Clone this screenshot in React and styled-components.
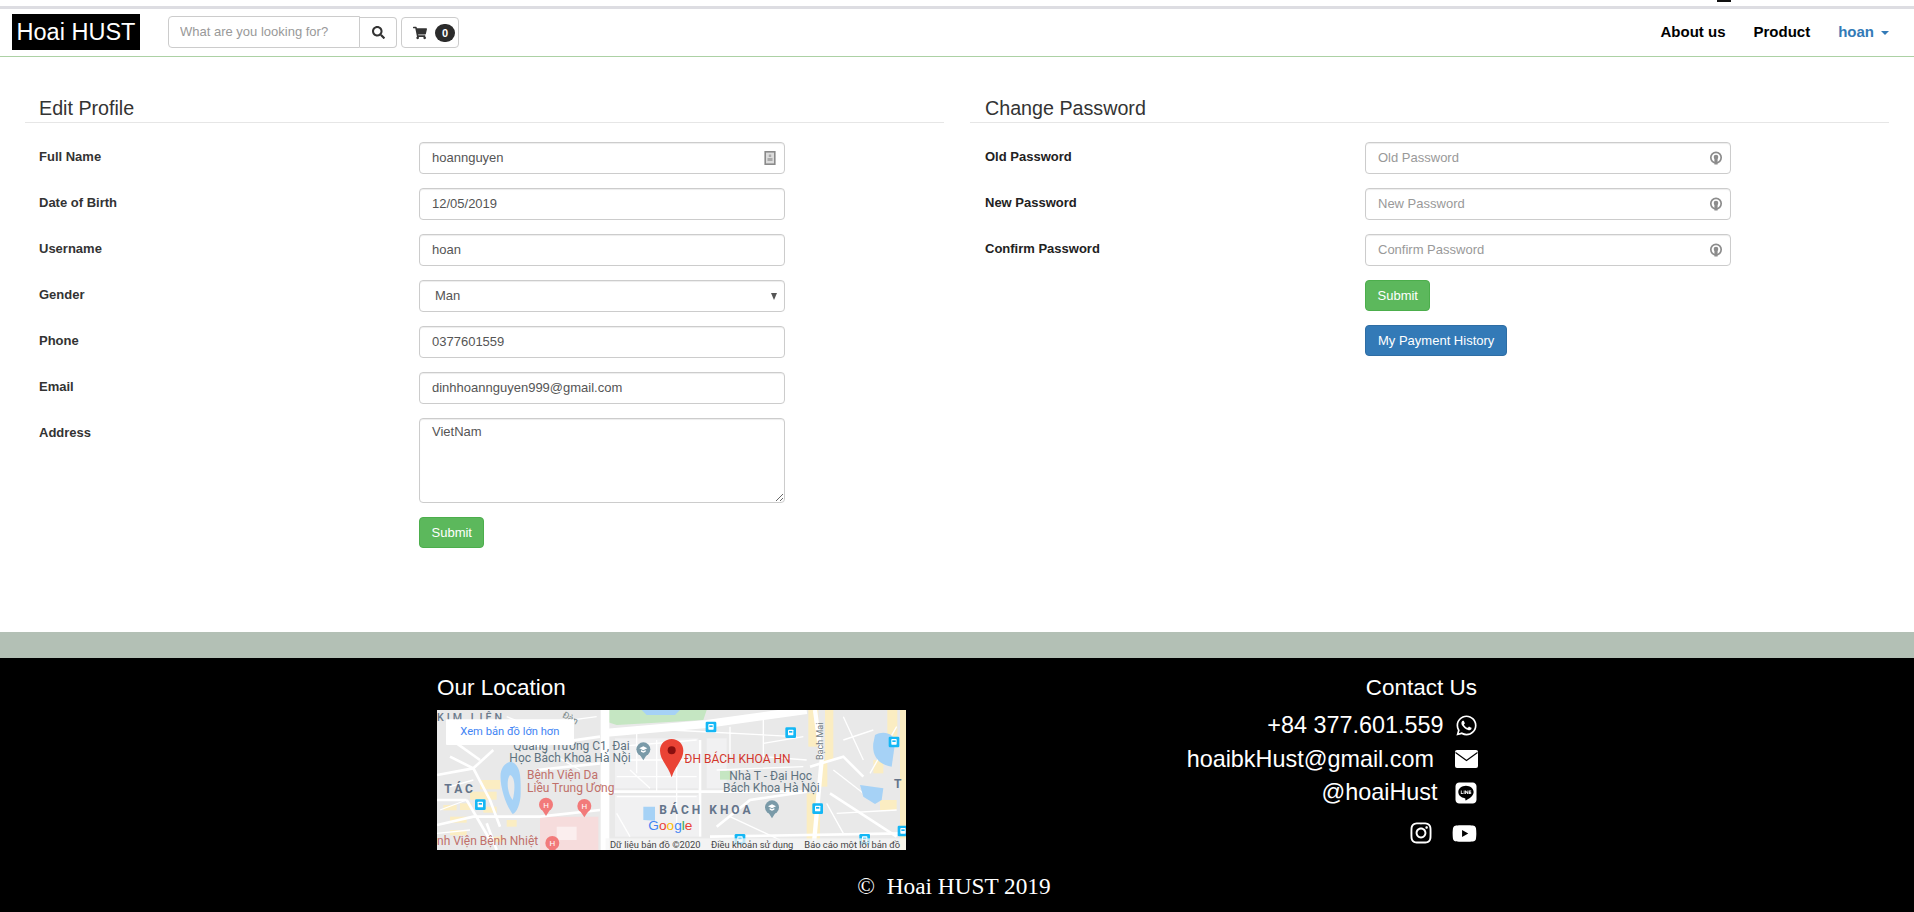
import styled, { createGlobalStyle } from "styled-components";
import { FaSearch, FaShoppingCart, FaWhatsapp, FaLine, FaInstagram, FaYoutube } from "react-icons/fa";

const GlobalStyle = createGlobalStyle`
  * { box-sizing: border-box; }
  body {
    margin: 0;
    background: #fff;
    font-family: "Liberation Sans", Arial, sans-serif;
    font-size: 13px;
    color: #333;
  }
`;

const TopStrip = styled.div`
  height: 6px;
  background: #fff;
  display: flex;
  justify-content: flex-end;
  padding-right: 183px;
`;

const TopMark = styled.span`
  width: 14px;
  height: 2px;
  background: #111;
`;

const TopLine = styled.div`
  height: 3px;
  background: #dddde2;
`;

const Navbar = styled.nav`
  height: 48px;
  border-bottom: 1px solid #acd1a4;
  display: flex;
  align-items: flex-start;
  justify-content: space-between;
  padding: 5px 25px 0 12px;
`;

const NavLeft = styled.div`
  display: flex;
  align-items: flex-start;
`;

const Logo = styled.a`
  width: 128px;
  height: 36px;
  background: #000;
  color: #fff;
  font-size: 23.5px;
  line-height: 36px;
  text-align: center;
`;

const SearchGroup = styled.div`
  display: flex;
  margin-left: 28px;
  margin-top: 2px;
`;

const SearchInput = styled.input`
  width: 192px;
  height: 32px;
  border: 1px solid #ccc;
  border-radius: 4px 0 0 4px;
  padding: 0 11px 1px;
  font: 13px "Liberation Sans", Arial, sans-serif;
  &::placeholder { color: #999; opacity: 1; }
`;

const ToolButton = styled.button`
  height: 31px;
  margin-top: 1px;
  background: #fff;
  border: 1px solid #ccc;
  color: #333;
  display: flex;
  align-items: center;
  padding: 0;
`;

const SearchButton = styled(ToolButton)`
  width: 37px;
  border-left: 0;
  border-radius: 0 4px 4px 0;
  justify-content: center;
  font-size: 13px;
`;

const CartButton = styled(ToolButton)`
  width: 58px;
  margin-left: 4px;
  border-radius: 4px;
  padding-left: 11px;
  font-size: 14px;
`;

const CartBadge = styled.span`
  width: 20px;
  height: 18px;
  margin-left: 8px;
  border-radius: 10px;
  background: #2b2b2b;
  color: #fff;
  font-size: 11px;
  font-weight: bold;
  line-height: 18px;
  text-align: center;
`;

const NavLinks = styled.div`
  display: flex;
  gap: 28px;
  padding-top: 9px;
`;

const NavLink = styled.a`
  font-size: 15px;
  font-weight: bold;
  line-height: 18px;
  color: ${(p) => (p.$active ? "#337ab7" : "#000")};
  display: flex;
  align-items: center;
`;

const Caret = styled.span`
  width: 0;
  height: 0;
  margin-left: 7px;
  margin-top: 2px;
  border-top: 4px solid #337ab7;
  border-left: 4px solid transparent;
  border-right: 4px solid transparent;
`;

const Main = styled.main`
  height: 575px;
  padding: 40px 25px 0;
  display: grid;
  grid-template-columns: 919px 919px;
  column-gap: 26px;
`;

const Column = styled.section`
  --inset: ${(p) => p.$inset}px;
`;

const Heading = styled.h3`
  margin: 0 0 19px;
  padding: 0 var(--inset) 3px;
  border-bottom: 1px solid #e6e6e6;
  font-size: 19.7px;
  font-weight: normal;
  line-height: 22px;
  color: #333;
`;

const FormRow = styled.div`
  display: grid;
  grid-template-columns: 380px 366px;
  padding-left: var(--inset);
  margin-bottom: 14px;
`;

const Label = styled.label`
  padding-top: 6px;
  font-size: 13px;
  font-weight: bold;
  line-height: 18px;
  color: ${(p) => (p.$dark ? "#222" : "#333")};
`;

const Field = styled.div`
  position: relative;
  height: ${(p) => p.$height || 32}px;
`;

const fieldStyle = `
  width: 100%;
  height: 100%;
  border: 1px solid #ccc;
  border-radius: 4px;
  background: #fff;
  box-shadow: inset 0 1px 1px rgba(0, 0, 0, 0.075);
  color: #555;
  font: 13px "Liberation Sans", Arial, sans-serif;
  padding: 5px 12px 7px;
  outline: none;
`;

const Input = styled.input`
  ${fieldStyle}
  &::placeholder { color: #999; opacity: 1; }
`;

const Select = styled.select`
  ${fieldStyle}
  appearance: none;
  padding-left: 15px;
`;

const Textarea = styled.textarea`
  ${fieldStyle}
  display: block;
  line-height: 18px;
  padding-top: 4px;
  resize: vertical;
`;

const FieldIcon = styled.svg`
  position: absolute;
  right: 8px;
  top: 9px;
  width: 14px;
  height: 14px;
`;

const SelectArrow = styled.span`
  position: absolute;
  right: 8px;
  top: 13px;
  width: 0;
  height: 0;
  border-top: 7px solid #555;
  border-left: 3.5px solid transparent;
  border-right: 3.5px solid transparent;
  pointer-events: none;
`;

const Button = styled.button`
  display: block;
  height: 31px;
  margin-bottom: 14px;
  padding: 0 ${(p) => (p.$primary ? 12 : 11.5)}px 1px;
  border: 1px solid ${(p) => (p.$primary ? "#2e6da4" : "#4cae4c")};
  border-radius: 4px;
  background: ${(p) => (p.$primary ? "#337ab7" : "#5cb85c")};
  color: #fff;
  font: 13px "Liberation Sans", Arial, sans-serif;
`;

const Band = styled.div`
  height: 26px;
  background: #b3c0b5;
`;

const Footer = styled.footer`
  height: 254px;
  background: #000;
  color: #fff;
  padding-top: 17px;
`;

const FooterInner = styled.div`
  width: 1040px;
  margin-left: 437px;
  display: flex;
  justify-content: space-between;
`;

const FooterTitle = styled.h4`
  margin: 0;
  font-size: 22.5px;
  font-weight: normal;
  line-height: 26px;
`;

const MapFrame = styled.svg`
  display: block;
  margin-top: 9px;
  width: 469px;
  height: 140px;
`;

const Contact = styled.div`
  display: flex;
  flex-direction: column;
  align-items: flex-end;
`;

const ContactRow = styled.div`
  display: flex;
  align-items: center;
  height: 33.5px;
  margin-right: -1px;
  gap: ${(p) => p.$gap}px;
  font-size: 23.4px;
  &:first-of-type { margin-top: 8px; }
  svg { font-size: ${(p) => p.$size}px; }
`;

const MailIcon = styled.svg`
  width: 23px;
  height: 18px;
`;

const SocialRow = styled.div`
  display: flex;
  align-items: center;
  gap: 19px;
  margin-top: 11px;
  font-size: 24px;
  svg:last-child { font-size: 25px; }
`;

const Copyright = styled.div`
  margin-top: 23px;
  padding-right: 6px;
  text-align: center;
  font-family: "Liberation Serif", "Times New Roman", serif;
  font-size: 23.3px;
  line-height: 26px;
  white-space: pre;
`;

const PersonIcon = () => (
  <FieldIcon viewBox="0 0 14 14">
    <rect x="2.2" y="0.8" width="9.6" height="12.4" fill="#ddd" stroke="#8a8a8a" strokeWidth="1.6" />
    <rect x="5.8" y="3.5" width="2.4" height="2.5" fill="#aaa" />
    <rect x="4.5" y="7" width="5" height="3" fill="#aaa" />
  </FieldIcon>
);

const KeyIcon = () => (
  <FieldIcon viewBox="0 0 14 14">
    <circle cx="7" cy="6.6" r="5.2" fill="none" stroke="#8c8c8c" strokeWidth="1.7" />
    <circle cx="7" cy="6" r="2.3" fill="#8c8c8c" />
    <rect x="5.4" y="6.5" width="3.2" height="7" fill="#8c8c8c" />
  </FieldIcon>
);

const BusStop = ({ x, y }) => (
  <g>
    <rect x={x} y={y} width="32" height="32" rx="4" fill="#14b7f5" />
    <rect x={x + 8} y={y + 7} width="16" height="17" rx="2" fill="#fff" />
    <rect x={x + 11} y={y + 11} width="10" height="5" fill="#14b7f5" />
  </g>
);

const Hospital = ({ x, y }) => (
  <g>
    <circle cx={x} cy={y} r="21" fill="#f27a7a" />
    <path d={`M${x - 11} ${y + 17} L${x} ${y + 34} L${x + 11} ${y + 17} Z`} fill="#f27a7a" />
    <text x={x} y={y + 9} textAnchor="middle" fontSize="24" fill="#fff" fontFamily="Roboto, sans-serif">H</text>
  </g>
);

const School = ({ x, y }) => (
  <g>
    <circle cx={x} cy={y} r="21" fill="#7a9aa8" />
    <path d={`M${x - 10} ${y + 17} L${x} ${y + 33} L${x + 10} ${y + 17} Z`} fill="#7a9aa8" />
    <path d={`M${x - 12} ${y - 3} L${x} ${y - 9} L${x + 12} ${y - 3} L${x} ${y + 3} Z`} fill="#fff" />
    <path d={`M${x - 7} ${y + 2} L${x} ${y + 6} L${x + 7} ${y + 2} L${x + 7} ${y + 7} L${x} ${y + 10} L${x - 7} ${y + 7} Z`} fill="#fff" />
  </g>
);

const roads = [
  "M21 345 L130 325 L180 420 L210 500",
  "M21 495 L130 470 L330 470 L510 450",
  "M130 325 L190 270 M60 290 L130 325 M80 250 L150 300",
  "M110 420 L180 540 M21 420 L110 420 M200 570 L170 490",
  "M300 260 L510 230 M320 330 L510 310",
  "M540 395 L1130 395",
  "M810 240 L810 530",
  "M840 530 L1420 520 M860 500 L960 420 L1130 395",
  "M1140 320 L1240 290 L1300 350 M1200 400 L1400 530",
];

const thinRoads = [
  "M21 520 L120 510 M60 380 L130 360 M30 450 L110 420",
  "M560 260 L800 240 M560 300 L800 300 M560 350 L800 350 M600 330 L660 385",
  "M620 200 L620 340 M680 240 L680 395 M740 320 L740 510 M560 410 L800 410 M560 460 L600 530",
  "M860 330 L1120 320 M900 200 L900 290 M1000 170 L1000 290 L1130 300 M720 210 L1100 230",
  "M230 170 L330 210 M350 190 L500 170 M380 290 L450 330 M1000 250 L1120 230",
  "M1210 330 L1300 400 M1240 170 L1300 300 M1320 340 L1400 200",
  "M1220 460 L1400 450 M1240 240 L1330 210 M900 470 L1050 540 M1240 520 L1190 430",
];

const yellow = [
  [150, 360, 60, 28], [120, 395, 80, 24], [90, 430, 35, 20], [60, 470, 50, 18], [160, 440, 40, 18],
  [230, 480, 30, 20], [40, 435, 40, 16], [60, 510, 50, 16], [190, 530, 30, 16],
  [1135, 150, 30, 110], [1185, 150, 25, 150], [1130, 400, 40, 140], [1172, 300, 20, 80], [1372, 150, 30, 90],
  [1410, 150, 18, 420], [1330, 300, 30, 40], [1350, 420, 50, 30],
];

const campus = [
  [555, 235, 250, 150], [555, 405, 250, 125], [830, 235, 60, 150],
];

const Map = () => (
  <MapFrame viewBox="21 150 1407 420" role="img" fontFamily="Roboto, 'Liberation Sans', sans-serif">
    <rect x="21" y="150" width="1407" height="420" fill="#e9e9e9" />
    <path d="M530 150 H830 L820 180 L560 195 L530 185 Z" fill="#c5e6c2" />
    <path d="M635 150 H750 L735 165 H650 Z" fill="#a6d2f6" />
    {campus.map(([x, y, w, h]) => (
      <rect key={`${x}-${y}`} x={x} y={y} width={w} height={h} fill="#f1f1f2" />
    ))}
    <path d="M330 470 H505 V570 H330 Z" fill="#f6dcdc" />
    <path d="M380 500 H440 V540 H380 Z" fill="#fff" opacity="0.5" />
    <rect x="870" y="333" width="32" height="26" fill="#c5e6c2" />
    {yellow.map(([x, y, w, h]) => (
      <rect key={`${x}-${y}`} x={x} y={y} width={w} height={h} fill="#fbedc2" />
    ))}
    {roads.map((d) => (
      <path key={d} d={d} stroke="#fff" strokeWidth="8" fill="none" />
    ))}
    {thinRoads.map((d) => (
      <path key={d} d={d} stroke="#fff" strokeWidth="4" fill="none" />
    ))}
    <path d="M525 150 V570" stroke="#fff" strokeWidth="26" />
    <path d="M530 218 L830 192 L1130 150" stroke="#fff" strokeWidth="24" fill="none" />
    <path d="M1155 150 L1175 300 L1150 570" stroke="#fff" strokeWidth="13" fill="none" />
    <path d="M240 305 C275 310 272 360 272 400 C272 430 260 460 248 462 C230 440 208 380 212 340 C216 320 225 310 240 305 Z" fill="#a6d2f6" />
    <path d="M240 345 C256 350 256 390 248 420 C232 400 228 360 240 345 Z" fill="#e9e9e9" />
    <path d="M1335 225 C1360 210 1395 220 1395 250 L1385 320 C1350 315 1325 290 1330 250 Z" fill="#a6d2f6" />
    <path d="M1290 375 L1360 385 L1355 420 L1335 432 L1300 410 Z" fill="#a6d2f6" />
    <path d="M640 440 H675 V482 L640 480 Z" fill="#a6d2f6" />
    <BusStop x={827} y={185} />
    <BusStop x={1066} y={202} />
    <BusStop x={1376} y={230} />
    <BusStop x={135} y={418} />
    <BusStop x={1147} y={430} />
    <BusStop x={1403} y={497} />
    <BusStop x={914} y={522} />
    <BusStop x={1288} y={522} />
    <School x={640} y={268} />
    <School x={1026} y={442} />
    <Hospital x={348} y={434} />
    <Hospital x={463} y={438} />
    <Hospital x={367} y={549} />
    <text x="21" y="182" fontSize="32" letterSpacing="9" fill="#6b7a8c" fontWeight="500">KIM LIÊN</text>
    <text x="395" y="170" fontSize="28" fill="#7b8a8a" transform="rotate(30 395 170)">Đàn</text>
    <text x="250" y="269" fontSize="36" fill="#5f7380">Quảng Trường C1, Đại</text>
    <text x="238" y="305" fontSize="36" fill="#5f7380">Học Bách Khoa Hà Nội</text>
    <text x="291" y="358" fontSize="36" fill="#c0706a">Bệnh Viện Da</text>
    <text x="291" y="396" fontSize="36" fill="#c0706a">Liều Trung Ương</text>
    <text x="43" y="398" fontSize="36" letterSpacing="9" fill="#64748a" fontWeight="700">TÁC</text>
    <text x="21" y="555" fontSize="36" fill="#c0706a">nh Viện Bệnh Nhiệt</text>
    <text x="763" y="310" fontSize="36" fill="#d3372c">ĐH BÁCH KHOA HN</text>
    <text x="898" y="360" fontSize="36" fill="#5f7380">Nhà T - Đại Học</text>
    <text x="879" y="397" fontSize="36" fill="#5f7380">Bách Khoa Hà Nội</text>
    <text x="688" y="463" fontSize="36" letterSpacing="9" fill="#64748a" fontWeight="700">BÁCH KHOA</text>
    <text x="1180" y="300" fontSize="27" fill="#6f7a80" transform="rotate(-90 1180 300)">Bạch Mai</text>
    <text x="1392" y="384" fontSize="36" fill="#64748a" fontWeight="700">T</text>
    <path d="M725 237 C705 237 690 252 690 272 C690 300 715 318 725 352 C735 318 760 300 760 272 C760 252 745 237 725 237 Z" fill="#ea4335" />
    <circle cx="725" cy="271" r="12" fill="#8a0f0f" />
    <text x="655" y="511" fontSize="41" fontFamily="'Liberation Sans', sans-serif">
      <tspan fill="#4285f4">G</tspan>
      <tspan fill="#ea4335">o</tspan>
      <tspan fill="#fbbc05">o</tspan>
      <tspan fill="#4285f4">g</tspan>
      <tspan fill="#34a853">l</tspan>
      <tspan fill="#ea4335">e</tspan>
    </text>
    <rect x="527" y="535" width="901" height="35" fill="#f5f5f5" opacity="0.75" />
    <text x="540" y="563" fontSize="28" fill="#444">Dữ liệu bản đồ ©2020</text>
    <text x="843" y="563" fontSize="28" fill="#444">Điều khoản sử dụng</text>
    <text x="1123" y="563" fontSize="28" fill="#444">Báo cáo một lỗi bản đồ</text>
    <rect x="48" y="178" width="384" height="77" rx="3" fill="#fff" />
    <text x="91" y="226" fontSize="33.5" fill="#4285f4">Xem bản đồ lớn hơn</text>
  </MapFrame>
);

export default function App() {
  return (
    <>
      <GlobalStyle />
      <TopStrip>
        <TopMark />
      </TopStrip>
      <TopLine />
      <Navbar>
        <NavLeft>
          <Logo>Hoai HUST</Logo>
          <SearchGroup>
            <SearchInput placeholder="What are you looking for?" />
            <SearchButton>
              <FaSearch />
            </SearchButton>
            <CartButton>
              <FaShoppingCart />
              <CartBadge>0</CartBadge>
            </CartButton>
          </SearchGroup>
        </NavLeft>
        <NavLinks>
          <NavLink>About us</NavLink>
          <NavLink>Product</NavLink>
          <NavLink $active>
            hoan
            <Caret />
          </NavLink>
        </NavLinks>
      </Navbar>

      <Main>
        <Column $inset={14}>
          <Heading>Edit Profile</Heading>
          <FormRow>
            <Label>Full Name</Label>
            <Field>
              <Input defaultValue="hoannguyen" />
              <PersonIcon />
            </Field>
          </FormRow>
          <FormRow>
            <Label>Date of Birth</Label>
            <Field>
              <Input defaultValue="12/05/2019" />
            </Field>
          </FormRow>
          <FormRow>
            <Label>Username</Label>
            <Field>
              <Input defaultValue="hoan" />
            </Field>
          </FormRow>
          <FormRow>
            <Label>Gender</Label>
            <Field>
              <Select defaultValue="Man">
                <option>Man</option>
                <option>Woman</option>
              </Select>
              <SelectArrow />
            </Field>
          </FormRow>
          <FormRow>
            <Label>Phone</Label>
            <Field>
              <Input defaultValue="0377601559" />
            </Field>
          </FormRow>
          <FormRow>
            <Label>Email</Label>
            <Field>
              <Input defaultValue="dinhhoannguyen999@gmail.com" />
            </Field>
          </FormRow>
          <FormRow>
            <Label>Address</Label>
            <Field $height={85}>
              <Textarea defaultValue="VietNam" />
            </Field>
          </FormRow>
          <FormRow>
            <span />
            <div>
              <Button>Submit</Button>
            </div>
          </FormRow>
        </Column>

        <Column $inset={15}>
          <Heading>Change Password</Heading>
          <FormRow>
            <Label $dark>Old Password</Label>
            <Field>
              <Input placeholder="Old Password" />
              <KeyIcon />
            </Field>
          </FormRow>
          <FormRow>
            <Label $dark>New Password</Label>
            <Field>
              <Input placeholder="New Password" />
              <KeyIcon />
            </Field>
          </FormRow>
          <FormRow>
            <Label $dark>Confirm Password</Label>
            <Field>
              <Input placeholder="Confirm Password" />
              <KeyIcon />
            </Field>
          </FormRow>
          <FormRow>
            <span />
            <div>
              <Button>Submit</Button>
              <Button $primary>My Payment History</Button>
            </div>
          </FormRow>
        </Column>
      </Main>

      <Band />

      <Footer>
        <FooterInner>
          <div>
            <FooterTitle>Our Location</FooterTitle>
            <Map />
          </div>
          <Contact>
            <FooterTitle>Contact Us</FooterTitle>
            <ContactRow $gap={11.5} $size={23}>
              +84 377.601.559 <FaWhatsapp />
            </ContactRow>
            <ContactRow $gap={21} $size={23}>
              hoaibkHust@gmail.com
              <MailIcon viewBox="0 0 23 18">
                <rect width="23" height="18" rx="2" fill="#fff" />
                <path d="M0.5 2.5 L11.5 10.5 L22.5 2.5" fill="none" stroke="#000" strokeWidth="1.2" />
              </MailIcon>
            </ContactRow>
            <ContactRow $gap={16.5} $size={24}>
              @hoaiHust <FaLine />
            </ContactRow>
            <SocialRow>
              <FaInstagram />
              <FaYoutube />
            </SocialRow>
          </Contact>
        </FooterInner>
        <Copyright>©  Hoai HUST 2019</Copyright>
      </Footer>
    </>
  );
}
